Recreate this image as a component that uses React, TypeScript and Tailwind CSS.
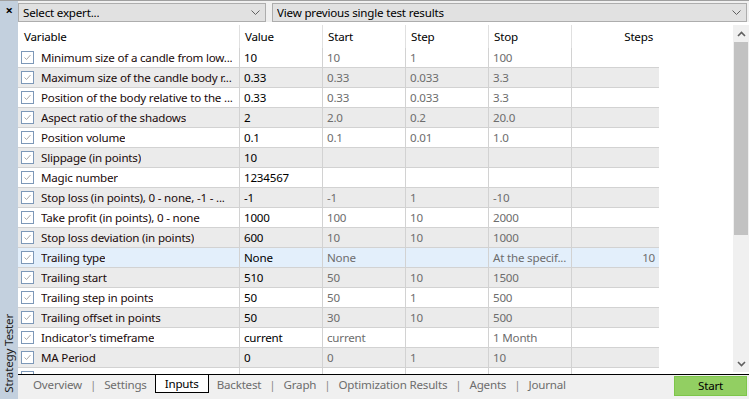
import React from 'react';

type Row = {
  name: string;
  value: string;
  start: string;
  step: string;
  stop: string;
  steps: string;
  bg: string;
};

const rows: Row[] = [
  { name: 'Minimum size of a candle from low...', value: '10', start: '10', step: '1', stop: '100', steps: '', bg: 'bg-white' },
  { name: 'Maximum size of the candle body r...', value: '0.33', start: '0.33', step: '0.033', stop: '3.3', steps: '', bg: 'bg-[#ebebeb]' },
  { name: 'Position of the body relative to the ...', value: '0.33', start: '0.33', step: '0.033', stop: '3.3', steps: '', bg: 'bg-white' },
  { name: 'Aspect ratio of the shadows', value: '2', start: '2.0', step: '0.2', stop: '20.0', steps: '', bg: 'bg-[#ebebeb]' },
  { name: 'Position volume', value: '0.1', start: '0.1', step: '0.01', stop: '1.0', steps: '', bg: 'bg-white' },
  { name: 'Slippage (in points)', value: '10', start: '', step: '', stop: '', steps: '', bg: 'bg-[#ebebeb]' },
  { name: 'Magic number', value: '1234567', start: '', step: '', stop: '', steps: '', bg: 'bg-white' },
  { name: 'Stop loss (in points), 0 - none, -1 - ...', value: '-1', start: '-1', step: '1', stop: '-10', steps: '', bg: 'bg-[#ebebeb]' },
  { name: 'Take profit (in points), 0 - none', value: '1000', start: '100', step: '10', stop: '2000', steps: '', bg: 'bg-white' },
  { name: 'Stop loss deviation (in points)', value: '600', start: '10', step: '10', stop: '1000', steps: '', bg: 'bg-[#ebebeb]' },
  { name: 'Trailing type', value: 'None', start: 'None', step: '', stop: 'At the specif...', steps: '10', bg: 'bg-[#e3effb]' },
  { name: 'Trailing start', value: '510', start: '50', step: '10', stop: '1500', steps: '', bg: 'bg-[#ebebeb]' },
  { name: 'Trailing step in points', value: '50', start: '50', step: '1', stop: '500', steps: '', bg: 'bg-white' },
  { name: 'Trailing offset in points', value: '50', start: '30', step: '10', stop: '500', steps: '', bg: 'bg-[#ebebeb]' },
  { name: "Indicator's timeframe", value: 'current', start: 'current', step: '', stop: '1 Month', steps: '', bg: 'bg-white' },
  { name: 'MA Period', value: '0', start: '0', step: '1', stop: '10', steps: '', bg: 'bg-[#ebebeb]' },
  { name: '', value: '', start: '', step: '', stop: '', steps: '', bg: 'bg-white' },
];

const tabs = ['Overview', 'Settings', 'Inputs', 'Backtest', 'Graph', 'Optimization Results', 'Agents', 'Journal'];

const Check: React.FC = () => (
  <svg width="13" height="13" viewBox="0 0 13 13" className="shrink-0">
    <rect x="0.5" y="0.5" width="12" height="12" fill="#fff" stroke="#7d98b8" />
    <polyline points="3.5,6.5 5.5,8.5 9.5,4" fill="none" stroke="#a6a6a6" strokeWidth="1" />
  </svg>
);

const Chevron: React.FC = () => (
  <svg width="9" height="6" viewBox="0 0 9 6">
    <polyline points="0.5,0.5 4.5,4.5 8.5,0.5" fill="none" stroke="#606060" strokeWidth="1" />
  </svg>
);

const Select: React.FC<{ label: string; className: string }> = ({ label, className }) => (
  <div className={`flex items-center justify-between h-[19px] border border-[#adadad] bg-[#e1e1e1] pl-[4px] pr-[5px] ${className}`}>
    <span className="truncate">{label}</span>
    <Chevron />
  </div>
);

const App: React.FC = () => {
  return (
    <div
      className="w-[749px] h-[399px] flex overflow-hidden text-[11.6px] tracking-[-0.2px] text-black bg-[#f0f0f0]"
      style={{ fontFamily: '"Noto Sans", "Liberation Sans", sans-serif' }}
    >
      {/* Vertical side strip */}
      <div className="w-[18px] shrink-0 bg-[#c3d0de] flex flex-col items-center justify-between pt-[3px] pb-[6px] border-t border-[#a0a0a0]">
        <span className="text-[13px] font-bold leading-none">×</span>
        <span className="[writing-mode:vertical-rl] rotate-180 leading-none text-[#202020]">Strategy Tester</span>
      </div>

      <div className="flex-1 flex flex-col min-w-0">
        {/* Top selects */}
        <div className="h-[22px] flex items-start gap-[6px] pt-[2px] pr-[2px] border-t border-[#a0a0a0]">
          <Select label="Select expert..." className="w-[248px]" />
          <Select label="View previous single test results" className="flex-1" />
        </div>

        {/* Table + scrollbar */}
        <div className="flex-1 flex bg-white min-h-0">
          <div className="w-[641px] shrink-0 flex flex-col overflow-hidden">
            <div className="h-[26px] shrink-0 flex pt-[3px]">
              <div className="w-[222px] border-r border-[#e0e0e0] pl-[6px] flex items-center">Variable</div>
              <div className="w-[83px] border-r border-[#e0e0e0] pl-[5px] flex items-center">Value</div>
              <div className="w-[83px] border-r border-[#e0e0e0] pl-[5px] flex items-center">Start</div>
              <div className="w-[83px] border-r border-[#e0e0e0] pl-[5px] flex items-center">Step</div>
              <div className="w-[83px] border-r border-[#e0e0e0] pl-[5px] flex items-center">Stop</div>
              <div className="w-[87px] pr-[6px] flex items-center justify-end">Steps</div>
            </div>
            {rows.map((r, i) => (
              <div key={i} className={`h-[20px] shrink-0 flex border-b border-[#d2d2d2] ${r.bg}`}>
                <div className="w-[222px] shrink-0 overflow-hidden border-r border-[#d2d2d2] pl-[3px] flex items-center gap-[7px] text-[#1a0a0a]">
                  <Check />
                  <span className="whitespace-nowrap overflow-hidden">{r.name}</span>
                </div>
                <div className="w-[83px] shrink-0 border-r border-[#d2d2d2] pl-[4px] flex items-center">{r.value}</div>
                <div className="w-[83px] shrink-0 border-r border-[#d2d2d2] pl-[4px] flex items-center text-[#6d6d6d]">{r.start}</div>
                <div className="w-[83px] shrink-0 border-r border-[#d2d2d2] pl-[4px] flex items-center text-[#6d6d6d]">{r.step}</div>
                <div className="w-[83px] shrink-0 border-r border-[#d2d2d2] pl-[4px] flex items-center text-[#6d6d6d] whitespace-nowrap overflow-hidden">{r.stop}</div>
                <div className="w-[87px] shrink-0 pr-[4px] flex items-center justify-end text-[#6d6d6d]">{r.steps}</div>
              </div>
            ))}
          </div>
          <div className="flex-1" />
          {/* Scrollbar */}
          <div className="w-[16px] shrink-0 flex flex-col pt-[3px] pb-[2px]">
            <div className="flex-1 flex flex-col bg-[#f0f0f0]">
              <div className="h-[17px] flex items-center justify-center">
                <svg width="9" height="6" viewBox="0 0 9 6">
                  <polyline points="1,5 4.5,1.5 8,5" fill="none" stroke="#606060" strokeWidth="1.6" />
                </svg>
              </div>
              <div className="h-[193px] mx-[1px] bg-[#c2c2c2]" />
              <div className="flex-1" />
              <div className="h-[17px] flex items-center justify-center">
                <svg width="9" height="6" viewBox="0 0 9 6">
                  <polyline points="1,1 4.5,4.5 8,1" fill="none" stroke="#606060" strokeWidth="1.6" />
                </svg>
              </div>
            </div>
          </div>
        </div>

        {/* Tab bar */}
        <div className="h-[25px] shrink-0 border-t border-black flex items-start">
          <div className="flex items-start pl-[7px] h-full">
            {tabs.map((t, i) => {
              const active = t === 'Inputs';
              const prevActive = tabs[i - 1] === 'Inputs';
              const sep = i > 0 && !active && !prevActive;
              return (
                <React.Fragment key={t}>
                  {sep && <span className="h-[19px] flex items-center text-[#8a8a8a]">|</span>}
                  <div
                    className={
                      active
                        ? 'h-[19px] -mt-px flex items-center px-[9px] bg-white border border-black'
                        : 'h-[19px] flex items-center px-[8px] text-[#6d6d6d]'
                    }
                  >
                    {t}
                  </div>
                </React.Fragment>
              );
            })}
          </div>
          <div className="flex-1" />
          <div className="mt-[1px] mr-[2px] w-[73px] h-[20px] bg-[#92cf62] border border-[#7dc64a] flex items-center justify-center">
            Start
          </div>
        </div>
      </div>
    </div>
  );
};

export default App;
